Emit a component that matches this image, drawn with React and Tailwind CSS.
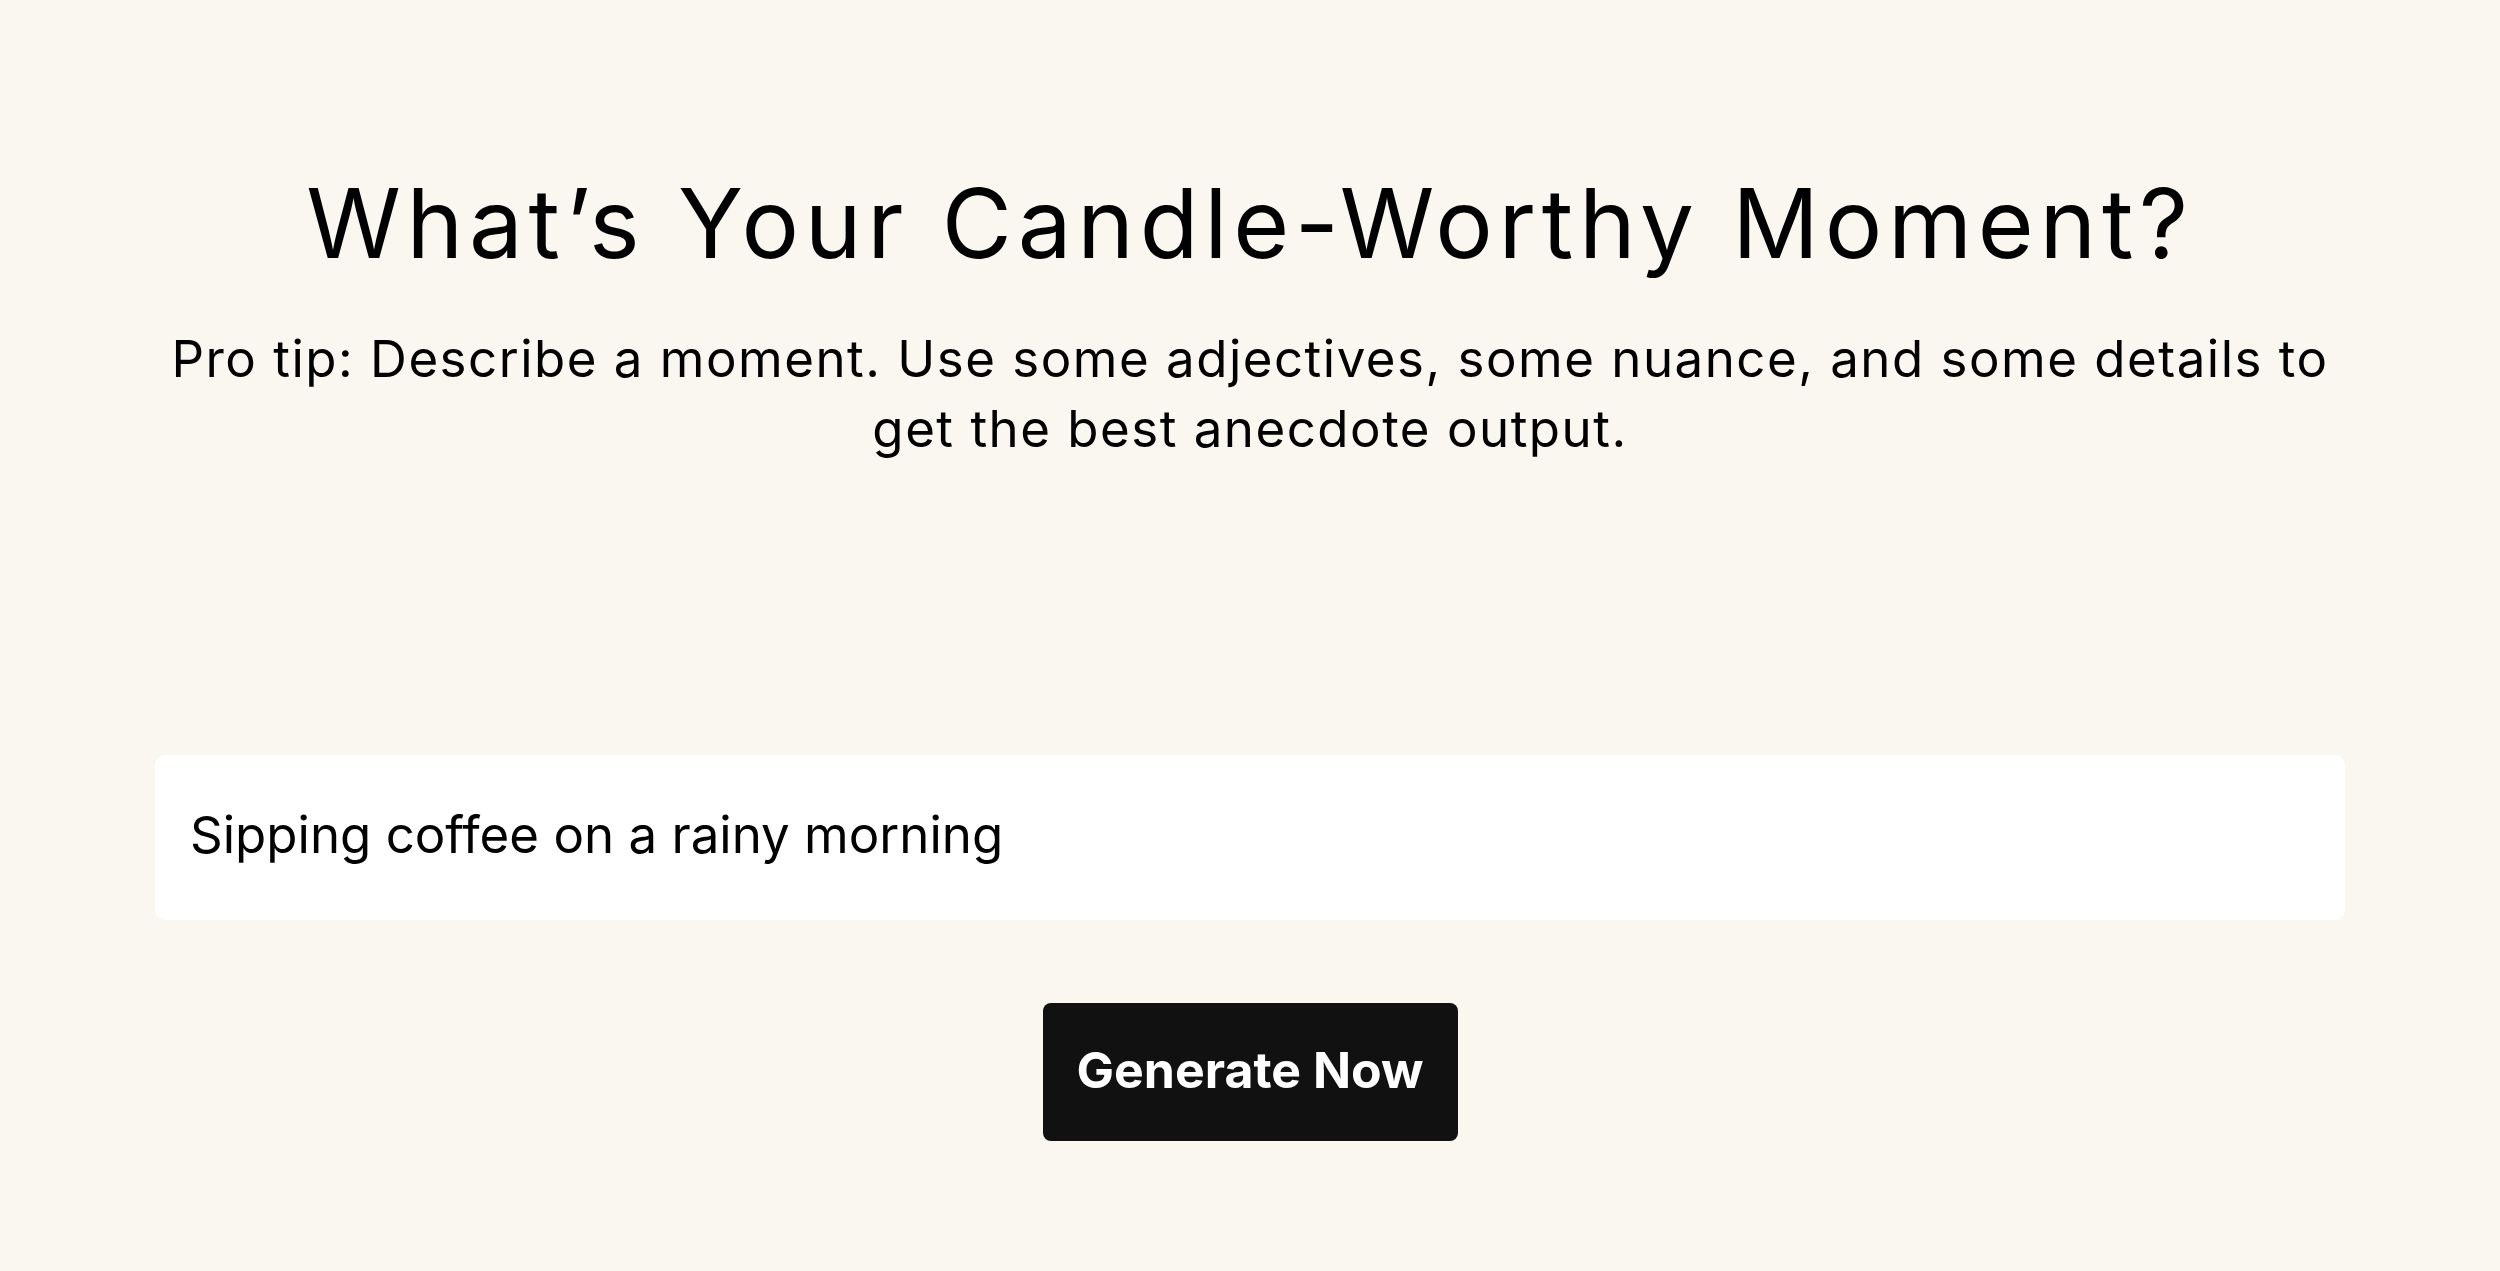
import React from "react";

export default function App() {
  return (
    <div className="min-h-screen w-full bg-[#faf7f0] flex flex-col items-center text-black">
      <h1 className="mt-[165px] font-['Inter',sans-serif] text-[96px] leading-[116px] font-normal tracking-[5.7px] text-black text-center">
        What’s Your Candle-Worthy Moment?
      </h1>
      <p className="mt-[43px] w-[2190px] font-['Inter',sans-serif] text-[51px] leading-[70px] tracking-[1.5px] text-black text-center">
        Pro tip: Describe a moment. Use some adjectives, some nuance, and some details to get the best anecdote output.
      </p>
      <div className="mt-[291px] w-[2190px] h-[165px] bg-white rounded-[10px] flex items-center px-[35px] pb-[4px]">
        <input
          type="text"
          defaultValue="Sipping coffee on a rainy morning"
          className="w-full bg-transparent outline-none font-['Inter',sans-serif] text-[51px] text-black"
        />
      </div>
      <button className="mt-[83px] w-[415px] h-[138px] bg-[#111111] rounded-[8px] text-white font-['Inter',sans-serif] font-bold text-[50px] flex items-center justify-center pb-[3px]">
        Generate Now
      </button>
    </div>
  );
}
